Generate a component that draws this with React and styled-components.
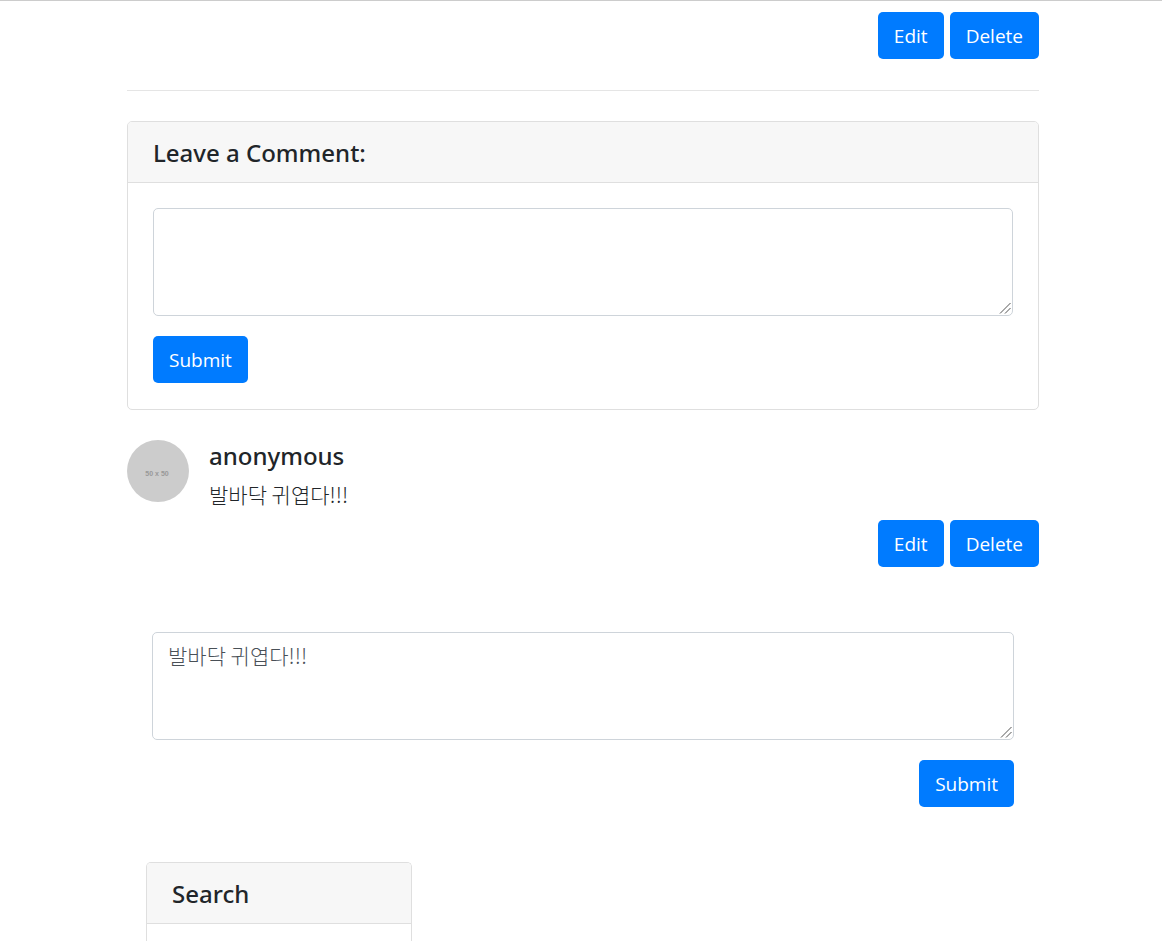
import React from "react";
import styled, { createGlobalStyle } from "styled-components";

const GlobalStyle = createGlobalStyle`
  *, *::before, *::after { box-sizing: border-box; }
  body {
    margin: 0;
    background: #fff;
    color: #212529;
    font-family: "Segoe UI", "Open Sans", "Noto Sans", "Noto Sans CJK KR", sans-serif;
    font-size: 19px;
    line-height: 30px;
  }
`;

const Page = styled.div`
  border-top: 1px solid #ccc;
`;

const Content = styled.main`
  padding: 11px 123px 0 127px;
`;

const Actions = styled.div`
  display: flex;
  justify-content: flex-end;
  gap: 6px;
`;

const Button = styled.button`
  display: block;
  height: 47px;
  padding: 1px 16px 0;
  border: 0;
  border-radius: 5px;
  background: #007bff;
  color: #fff;
  font: inherit;
  cursor: pointer;
`;

const Divider = styled.hr`
  margin: 31px 0 30px;
  border: 0;
  border-top: 1px solid #e5e5e5;
`;

const Card = styled.section`
  border: 1px solid #dfdfdf;
  border-radius: 5px;
`;

const CardHeader = styled.h2`
  margin: 0;
  height: 61px;
  padding: 16px 25px 14px;
  border-bottom: 1px solid #dfdfdf;
  border-radius: 4px 4px 0 0;
  background: #f7f7f7;
  font-family: "Noto Sans", sans-serif;
  font-size: 24px;
  font-weight: 500;
  line-height: 30px;
`;

const CardForm = styled.form`
  padding: 25px 25px 26px;
`;

const TextArea = styled.textarea`
  display: block;
  width: 100%;
  height: 108px;
  margin-bottom: 20px;
  padding: 7px 15px;
  border: 1px solid #ced4da;
  border-radius: 5px;
  background: #fff;
  color: #495057;
  font-family: "Noto Sans CJK KR", sans-serif;
  font-size: 21px;
  font-weight: 300;
  line-height: 30px;
  resize: vertical;

  &::-webkit-resizer {
    background: url("data:image/svg+xml,%3Csvg xmlns='http://www.w3.org/2000/svg' width='15' height='15'%3E%3Cpath d='M3 13.5L13.5 3M8 13.5L13.5 8' stroke='%23555' fill='none'/%3E%3C/svg%3E")
      right bottom no-repeat;
  }
`;

const Comment = styled.article`
  display: flex;
  gap: 20px;
  margin-top: 30px;
  margin-bottom: 11px;
`;

const Avatar = styled.svg`
  flex: none;
  width: 62px;
  height: 62px;
`;

const Author = styled.h3`
  margin: 0 0 7px;
  font-family: "Noto Sans", sans-serif;
  font-size: 24px;
  font-weight: 500;
  line-height: 32px;
`;

const Message = styled.p`
  margin: 0;
  font-family: "Noto Sans CJK KR", sans-serif;
  font-size: 21px;
  font-weight: 300;
`;

const EditForm = styled.form`
  padding: 65px 25px 55px;
`;

const SearchCard = styled(Card)`
  width: 266px;
  margin-left: 19px;
  border-bottom: 0;
  border-radius: 5px 5px 0 0;
`;

const SearchBody = styled.div`
  height: 17px;
`;

function CommentActions() {
  return (
    <Actions>
      <Button type="button">Edit</Button>
      <Button type="button">Delete</Button>
    </Actions>
  );
}

export default function App() {
  return (
    <>
      <GlobalStyle />
      <Page>
        <Content>
          <CommentActions />
          <Divider />
          <Card>
            <CardHeader id="comment-title">Leave a Comment:</CardHeader>
            <CardForm onSubmit={(e) => e.preventDefault()}>
              <TextArea aria-labelledby="comment-title" />
              <Button type="submit">Submit</Button>
            </CardForm>
          </Card>
          <Comment>
            <Avatar viewBox="0 0 62 62" role="img" aria-label="Avatar">
              <circle cx="31" cy="31" r="31" fill="#ccc" />
              <text
                x="30"
                y="36"
                textAnchor="middle"
                fontFamily="Liberation Sans, sans-serif"
                fontSize="7"
                fontWeight="700"
                fill="#999"
              >
                50 x 50
              </text>
            </Avatar>
            <div>
              <Author>anonymous</Author>
              <Message>발바닥 귀엽다!!!</Message>
            </div>
          </Comment>
          <CommentActions />
          <EditForm onSubmit={(e) => e.preventDefault()}>
            <TextArea aria-label="Edit comment" defaultValue="발바닥 귀엽다!!!" />
            <Actions>
              <Button type="submit">Submit</Button>
            </Actions>
          </EditForm>
          <SearchCard>
            <CardHeader>Search</CardHeader>
            <SearchBody />
          </SearchCard>
        </Content>
      </Page>
    </>
  );
}
